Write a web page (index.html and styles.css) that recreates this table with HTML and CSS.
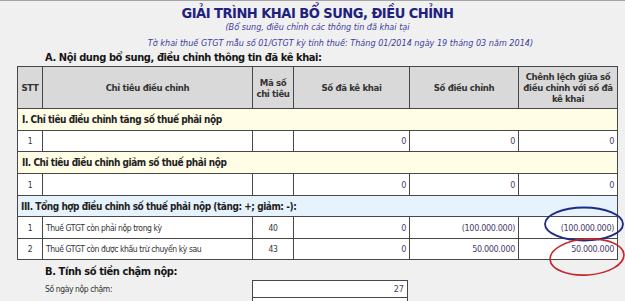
FILE: index.html
```html
<!DOCTYPE html>
<html lang="vi">
<head>
<meta charset="utf-8">
<title>Giải trình khai bổ sung, điều chỉnh</title>
<link rel="stylesheet" href="styles.css">
</head>
<body>
<div class="page">
  <header class="doc-head">
    <h1 class="title">GIẢI TRÌNH KHAI BỔ SUNG, ĐIỀU CHỈNH</h1>
    <p class="sub">(Bổ sung, điều chỉnh các thông tin đã khai tại</p>
    <p class="sub sub-2">Tờ khai thuế GTGT mẫu số 01/GTGT kỳ tính thuế: Tháng 01/2014 ngày 19 tháng 03 năm 2014)</p>
  </header>
  <h2 class="sec-title">A. Nội dung bổ sung, điều chỉnh thông tin đã kê khai:</h2>
  <table class="grid">
    <colgroup>
      <col class="c-stt"><col class="c-name"><col class="c-code"><col class="c-num1"><col class="c-num2"><col class="c-num3">
    </colgroup>
    <thead>
      <tr class="head">
        <th>STT</th>
        <th>Chỉ tiêu điều chỉnh</th>
        <th>Mã số chỉ tiêu</th>
        <th>Số đã kê khai</th>
        <th>Số điều chỉnh</th>
        <th>Chênh lệch giữa số điều chỉnh với số đã kê khai</th>
      </tr>
    </thead>
    <tbody>
      <tr class="group g-yellow"><td colspan="6">I. Chỉ tiêu điều chỉnh tăng số thuế phải nộp</td></tr>
      <tr class="row r21"><td class="ctr">1</td><td></td><td></td><td class="num">0</td><td class="num">0</td><td class="num">0</td></tr>
      <tr class="group g-yellow"><td colspan="6">II. Chỉ tiêu điều chỉnh giảm số thuế phải nộp</td></tr>
      <tr class="row"><td class="ctr">1</td><td></td><td></td><td class="num">0</td><td class="num">0</td><td class="num">0</td></tr>
      <tr class="group g-blue g21"><td colspan="6">III. Tổng hợp điều chỉnh số thuế phải nộp (tăng: +; giảm: -):</td></tr>
      <tr class="row"><td class="ctr">1</td><td class="txt">Thuế GTGT còn phải nộp trong kỳ</td><td class="ctr">40</td><td class="num">0</td><td class="num">(100.000.000)</td><td class="num">(100.000.000)</td></tr>
      <tr class="row r21"><td class="ctr">2</td><td class="txt">Thuế GTGT còn được khấu trừ chuyển kỳ sau</td><td class="ctr">43</td><td class="num">0</td><td class="num">50.000.000</td><td class="num">50.000.000</td></tr>
    </tbody>
  </table>
  <h2 class="sec-title sec-b">B. Tính số tiền chậm nộp:</h2>
  <div class="form">
    <div class="form-row">
      <span class="form-label">Số ngày nộp chậm:</span>
      <span class="form-box">27</span>
    </div>
    <div class="form-row">
      <span class="form-label"></span>
      <span class="form-box"></span>
    </div>
  </div>
  <svg class="marks" width="625" height="301" viewBox="0 0 625 301" aria-hidden="true">
    <ellipse cx="584" cy="224" rx="39" ry="16.5" fill="none" stroke="#1c2a8a" stroke-width="1.8"/>
    <ellipse cx="587" cy="257" rx="37" ry="18" fill="none" stroke="#c8242c" stroke-width="1.6" transform="rotate(-4 587 257)"/>
  </svg>
</div>
</body>
</html>
```
FILE: styles.css
```css
html, body {
  margin: 0;
  padding: 0;
}
body {
  background: #f0f0f0;
  font-family: "DejaVu Sans Condensed", "DejaVu Sans", sans-serif;
  font-stretch: condensed;
  color: #222;
  overflow: hidden;
}
.page {
  position: relative;
  width: 625px;
  height: 301px;
  border-top: 1px solid #a4a4a4;
  box-sizing: border-box;
  overflow: hidden;
}
.doc-head {
  text-align: center;
  padding-left: 10px;
}
.title {
  margin: 0;
  padding-top: 4px;
  font-size: 14.5px;
  line-height: 17px;
  letter-spacing: -0.5px;
  font-weight: bold;
  color: #1f2180;
}
.sub {
  margin: 0;
  font-style: italic;
  font-size: 9px;
  line-height: 11px;
  color: #3d3d9e;
}
.sub-2 {
  margin-top: 3px;
  line-height: 14px;
  padding-left: 46px;
}
.sec-title {
  margin: 0;
  padding-left: 45px;
  font-size: 11px;
  line-height: 16px;
  letter-spacing: -0.4px;
  font-weight: bold;
  color: #151515;
}
.grid {
  margin-left: 17px;
  width: 600px;
  table-layout: fixed;
  border-collapse: collapse;
  font-size: 8.5px;
  letter-spacing: -0.4px;
  color: #333;
}
.c-stt { width: 25px; }
.c-name { width: 210px; }
.c-code { width: 41px; }
.c-num1 { width: 116px; }
.c-num2 { width: 109px; }
.c-num3 { width: 99px; }
.grid th, .grid td {
  border: 1px solid #474747;
  padding: 0 3px;
  box-sizing: border-box;
}
.head th {
  background: #d9d9d9;
  height: 42px;
  font-weight: bold;
  font-size: 9.5px;
  line-height: 11px;
  letter-spacing: -0.35px;
  color: #333;
  text-align: center;
  padding: 0 2px;
}
.group td {
  height: 22px;
  font-weight: bold;
  font-size: 10px;
  letter-spacing: -0.45px;
  color: #222;
  padding-left: 4px;
}
.g21 td { height: 21px; padding-left: 3px; }
.g-yellow td { background: #fffde6; }
.g-blue td { background: #e6f2fc; }
.row td {
  height: 22px;
  background: #fff;
}
.row.r21 td { height: 21px; }
.ctr { text-align: center; }
.num { text-align: right; color: #4a3c6a; font-size: 9px; letter-spacing: -0.35px; }
.txt { padding-left: 2px; }
.sec-b {
  margin-top: 4px;
}
.form-row {
  display: flex;
  align-items: center;
}
.form-label {
  width: 207px;
  padding-left: 45px;
  font-size: 8.5px;
  letter-spacing: -0.4px;
  color: #333;
}
.form-box {
  width: 156px;
  height: 18px;
  box-sizing: border-box;
  border: 1px solid #474747;
  background: #fff;
  font-size: 9px;
  line-height: 16px;
  text-align: right;
  padding-right: 3px;
  color: #4a3c6a;
}
.form-row + .form-row .form-box { border-top: 0; }
.marks {
  position: absolute;
  left: 0;
  top: -1px;
  pointer-events: none;
}
```
